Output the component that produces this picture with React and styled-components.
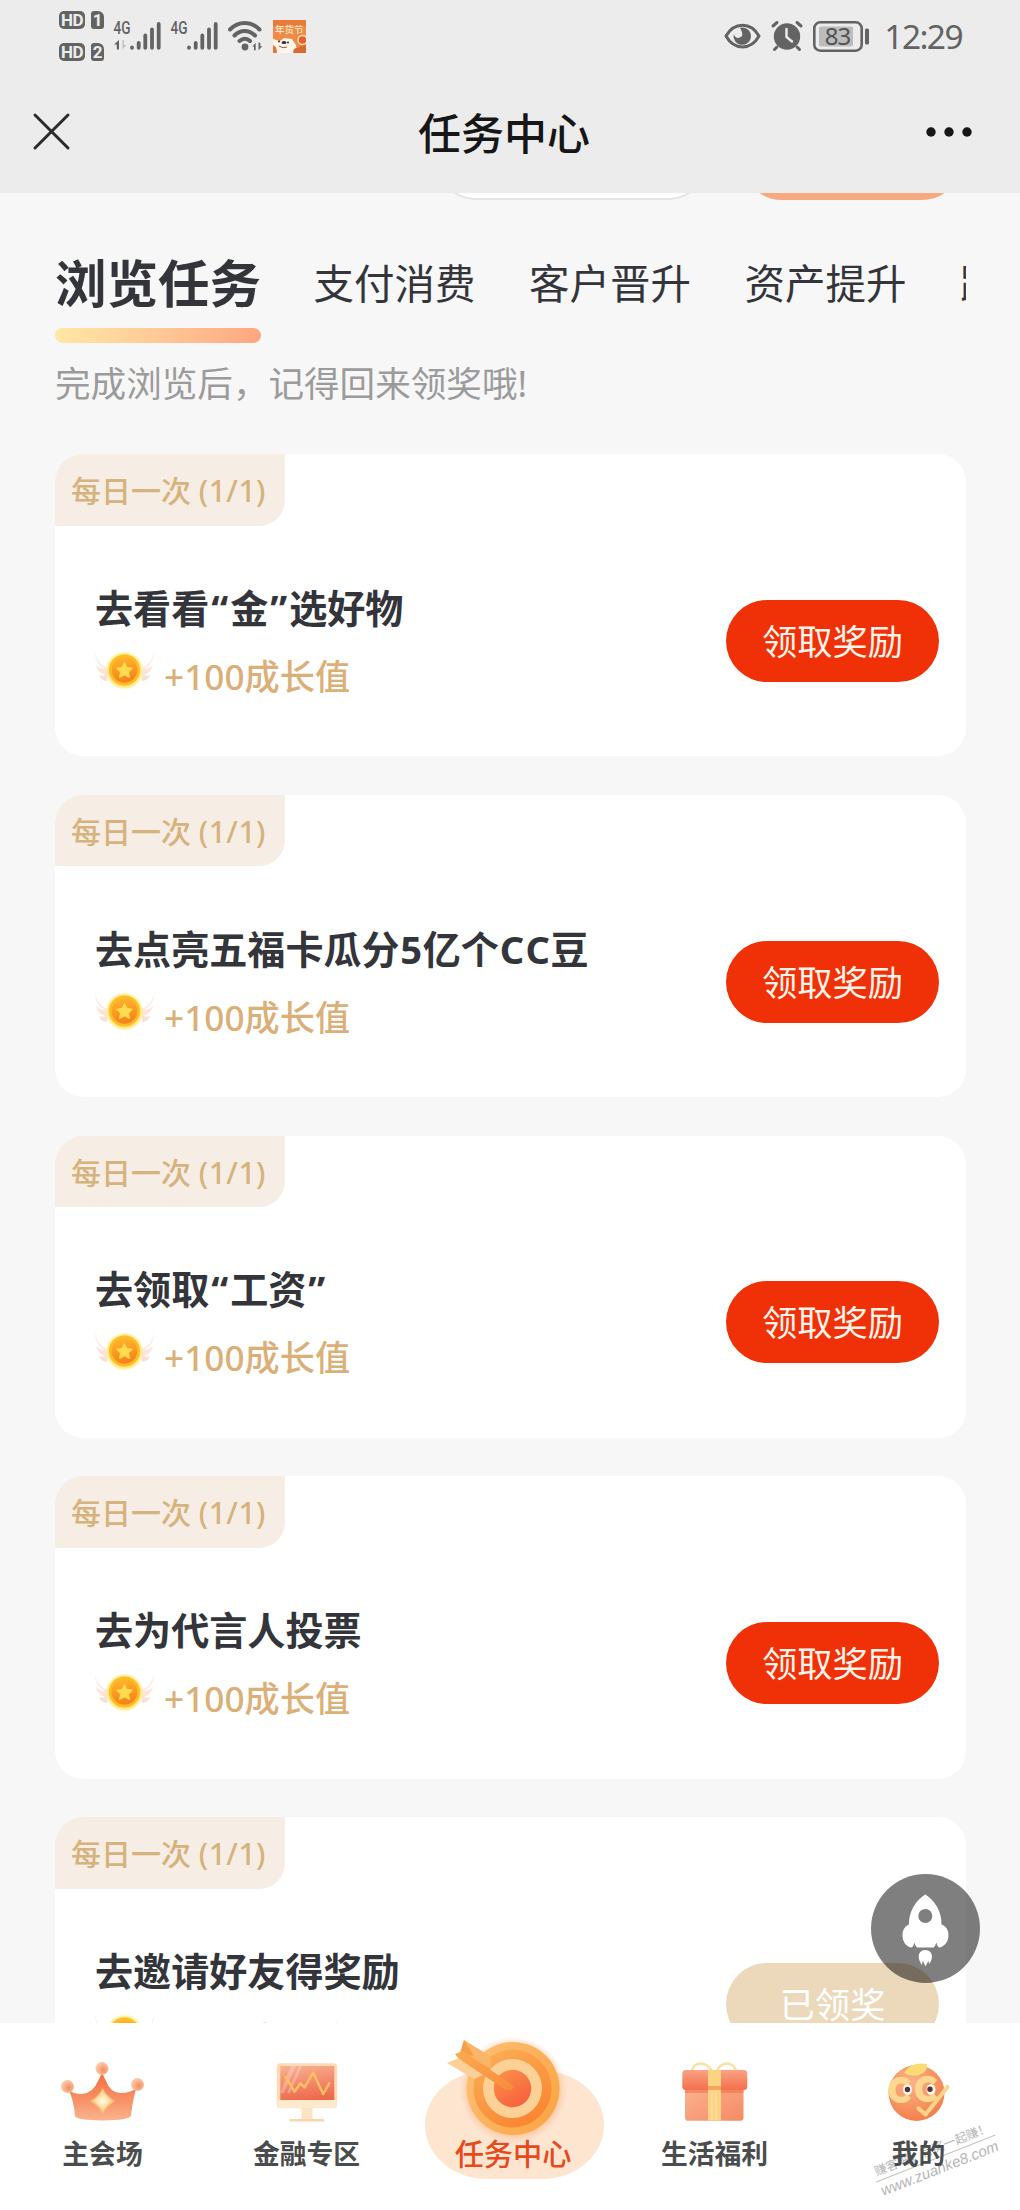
import React from 'react';
import styled, { createGlobalStyle, css } from 'styled-components';

const GlobalStyle = createGlobalStyle`
  * {
    box-sizing: border-box;
  }

  body {
    margin: 0;
    background-color: #f7f7f7;
    font-family: 'Noto Sans', 'Noto Sans CJK SC', sans-serif;
  }

  svg {
    display: block;
    flex-shrink: 0;
    overflow: visible;
  }
`;

const Page = styled.div`
  display: flex;
  flex-direction: column;
  width: 1020px;
  height: 2210px;
  overflow: hidden;
  background-color: #f7f7f7;
  color: #33353a;
`;

/* ---------- status bar + title bar ---------- */

const StatusBar = styled.div`
  display: flex;
  justify-content: space-between;
  height: 72px;
  padding: 0 58px 0 59px;
  background-color: #ececec;
`;

const StatusGroup = styled.div`
  display: flex;
  align-items: center;
  gap: 10px;
`;

const HdColumn = styled.div`
  display: flex;
  flex-direction: column;
  gap: 14px;
`;

const HdRow = styled.div`
  display: flex;
  gap: 6px;
`;

const HdTag = styled.span`
  width: ${p => p.$sim ? 13 : 26}px;
  height: 18px;
  border-radius: ${p => p.$sim ? '3px 6px 3px 3px' : '5px'};
  background-color: #636363;
  color: #ececec;
  font: 700 17px/18.5px Roboto, sans-serif;
  letter-spacing: -.5px;
  text-align: center;
`;

const Clock = styled.span`
  margin-left: 4px;
  color: #636363;
  font-size: 33.5px;
  line-height: 40px;
  letter-spacing: -1.6px;
`;

const TitleBar = styled.header`
  display: flex;
  align-items: center;
  justify-content: space-between;
  height: 121px;
  padding: 0 48px 0 33px;
  background-color: #ececec;
  color: #161616;

  svg {
    margin-bottom: 2px;
  }
`;

const PageTitle = styled.h1`
  margin: 3px 0 0 12px;
  font-size: 43px;
  font-weight: 500;
  line-height: 60px;
`;

/* ---------- scroll area ---------- */

const Content = styled.main`
  flex: 1;
  min-height: 0;
  overflow: hidden;
  padding: 0 54.5px 0 55px;
`;

// bottom edge of the buttons that are scrolled under the title bar
const PeekRow = styled.div`
  display: flex;
  justify-content: flex-end;
  align-items: flex-end;
  gap: 34px;
  height: 6.5px;
  overflow: hidden;
`;

const PeekButton = styled.div`
  flex-shrink: 0;
  width: ${p => p.$primary ? 220 : 272}px;
  height: 80px;
  margin-right: ${p => p.$primary ? 4 : 0}px;
  border: 2px solid ${p => p.$primary ? '#f8a980' : '#e4e4e4'};
  border-radius: 40px;
  background-color: ${p => p.$primary ? '#f8a980' : '#fff'};
`;

const Tabs = styled.nav`
  display: flex;
  gap: 53.5px;
  margin-top: 53.5px;
  overflow: hidden;
`;

const Tab = styled.div`
  flex-shrink: 0;
  height: 90px;
  font-size: 40.5px;
  line-height: 61px;
  white-space: nowrap;

  ${p => p.$active && css`
    font-size: 51.5px;
    font-weight: 700;
    line-height: 60px;
    margin-right: -1px;

    &::after {
      content: '';
      display: block;
      height: 15px;
      margin-top: 15px;
      border-radius: 8px;
      background: linear-gradient(100deg, #ffe8a6, #ffc996 50%, #ffa580);
    }
  `}
`;

const Hint = styled.p`
  margin: 15px 0 46px;
  color: #9b9b9b;
  font-size: 35.6px;
  line-height: 50px;
`;

const TaskList = styled.div`
  display: flex;
  flex-direction: column;
  gap: 38.5px;
`;

const Card = styled.section`
  flex-shrink: 0;
  display: flex;
  flex-direction: column;
  align-items: flex-start;
  height: 302.3px;
  overflow: hidden;
  border-radius: 28px;
  background-color: #fff;
`;

const Badge = styled.div`
  width: 230px;
  height: 71.5px;
  padding-left: 16px;
  border-radius: 0 0 26px 0;
  background-color: #f6ede4;
  color: #d6b27c;
  font-size: 30px;
  font-weight: 500;
  line-height: 73px;
  white-space: nowrap;
`;

const Count = styled.span`
  letter-spacing: .5px;
`;

const CardBody = styled.div`
  flex: 1;
  display: flex;
  align-items: center;
  justify-content: space-between;
  width: 100%;
  padding: 0 26.5px 0 39px;
`;

const TaskTitle = styled.h3`
  margin: 5px 0 0 1px;
  font-size: 38.1px;
  font-weight: 700;
  line-height: 66px;
  white-space: nowrap;
`;

const Latin = styled.span`
  padding: 0 ${p => p.$quote ? 2 : .7}px;
`;

const Reward = styled.div`
  display: flex;
  align-items: center;
  gap: 8px;
  height: 71px;
  color: #dab078;
  font-size: 35.2px;
  font-weight: 500;
  line-height: 71px;

  svg {
    margin-bottom: 13px;
  }
`;

const ClaimButton = styled.button`
  width: 213px;
  height: 82px;
  padding: 0;
  border: 0;
  border-radius: 41px;
  background-color: ${p => p.$done ? '#ecd8bb' : '#f03006'};
  color: ${p => p.$done ? '#fff' : '#fff3ea'};
  font-family: inherit;
  font-size: 35.3px;
  line-height: 82px;
`;

/* ---------- bottom bar ---------- */

const BottomBar = styled.footer`
  position: relative;
  display: flex;
  height: 187px;
  background-color: #fff;
`;

const NavItem = styled.div`
  flex: 0 0 204px;
  display: flex;
  flex-direction: column;
  align-items: center;
  padding-top: ${p => p.$active ? 48 : 39}px;
  padding-left: ${p => p.$active ? 9 : 1}px;
`;

const NavLabel = styled.span`
  position: relative;
  z-index: 1;
  margin-top: 14px;
  color: #4b4c4e;
  font-size: 26.8px;
  font-weight: 700;
  line-height: 36px;
  white-space: nowrap;
`;

const ActiveBlob = styled.div`
  display: flex;
  flex-direction: column;
  align-items: center;
  width: 179px;
  height: 108px;
  border-radius: 62px / 54px;
  background-color: #fde5d0;

  svg {
    margin: -33px 15px 0 0;
  }

  ${NavLabel} {
    margin: -2px 3px 0 0;
    color: #e6491c;
    font-size: 29.2px;
    font-weight: 500;
  }
`;

const TopButton = styled.div`
  position: absolute;
  right: 40px;
  top: -149px;
  width: 109px;
  height: 109px;
  border-radius: 50%;
  background-color: rgba(0, 0, 0, .5);
`;

const Watermark = styled.div`
  position: absolute;
  left: 872px;
  top: 117px;
  width: 128px;
  color: #b5b5b5;
  font-size: 12.3px;
  line-height: 18px;
  text-align: center;
  white-space: nowrap;
  transform: rotate(-21.5deg);
`;

const WatermarkSite = styled.div`
  border-top: 1px solid #c4c4c4;
  font: italic 15px/19px 'Liberation Sans', sans-serif;
`;

/* ---------- icons ---------- */

const Signal = ({ data }) => (
  <svg width="47" height="30" viewBox="0 0 47 30" fill="#636363">
    <text x="-.5" y="13.300" fontFamily="Roboto" fontWeight="500" fontSize="18.500" textLength="17" lengthAdjust="spacingAndGlyphs">4G</text>
    {data && <path d="M0 23.500l5-4.500v9.500H2.800v-5z" />}
    {data && <path d="M8.500 19v9.500l4-4.500H10v-5z" fill="#c2c2c2" />}
    <g stroke="#636363" strokeWidth="3.800" strokeLinecap="round">
      <path d="M18 26.500v.3M24.700 22v4.800M31.300 14.500v12.300M38 8.500v18.300M44.700 3v23.800" />
    </g>
  </svg>
);

const Wifi = () => (
  <svg width="35" height="30" viewBox="0 0 35 30" fill="none" stroke="#636363" strokeWidth="4" strokeLinecap="round">
    <path d="M2 8.500C10.500-.2 23-.2 31.500 8.500M6.500 14.500c6-6 14.500-6 20.500 0M11.500 20c3.500-3 7.500-3 10.500 0" />
    <circle cx="17" cy="26" r="3.400" fill="#636363" stroke="none" />
    <path d="M24.500 25.500l3.200-3.800v7.500H26v-3.500zM30.500 21.500v7.700l3.800-4h-2v-3.500z" fill="#636363" stroke="none" />
  </svg>
);

const AppIcon = styled.svg`
  overflow: hidden;
`;

const FestivalApp = () => (
  <AppIcon width="33" height="33" viewBox="0 0 33 33">
    <rect width="33" height="33" fill="#f08a45" />
    <rect width="33" height="6" fill="#e87a3a" />
    <text x="2" y="12.500" fontSize="9.500" fontWeight="500" fill="#fde9c8" fontFamily="Noto Sans CJK SC">年货节</text>
    <path d="M0 19l7 2 4-3 8 1 4 6 1 8H0z" fill="#fff5ea" />
    <path d="M21 29l12-5v9H20z" fill="#d96a2f" />
    <circle cx="29.500" cy="20" r="4.500" fill="#e9602d" stroke="#ffe1bd" strokeWidth="1.500" />
    <ellipse cx="11" cy="22.500" rx="2.500" ry="1.500" fill="#333" />
    <circle cx="6" cy="21.500" r="1" fill="#333" />
    <circle cx="15" cy="22.500" r="1" fill="#333" />
    <path d="M6 26q4 3 8 1" stroke="#a3583c" fill="none" />
    <path d="M0 25q4 1 4 8H0z" fill="#e5793c" />
  </AppIcon>
);

const EyeIcon = () => (
  <svg width="37" height="26" viewBox="0 0 37 26">
    <path d="M2 13C10-1.500 27-1.500 35 13 27 27.500 10 27.500 2 13z" fill="none" stroke="#636363" strokeWidth="3" strokeLinejoin="round" />
    <path d="M16 4.700A8.700 8.700 0 1 1 9.800 11q1.500 4.500 5.200 3.800 4.500-1 3-5.500-.6-2-2-4.600z" fill="#636363" />
  </svg>
);

const AlarmIcon = () => (
  <svg width="32" height="30" viewBox="0 0 32 30" fill="none" stroke="#636363" strokeLinecap="round">
    <circle cx="16" cy="15.500" r="13.200" fill="#636363" stroke="none" />
    <path d="M2 5l4-3.500M26 1.500L30 5M6 26l-2.500 2.500M26 26l2.500 2.500" strokeWidth="3" />
    <path d="M15.500 8v8l5.500 4.500" stroke="#ececec" strokeWidth="2.500" />
  </svg>
);

const Battery = () => (
  <svg width="57" height="31" viewBox="0 0 57 31">
    <rect x="1.300" y="1.300" width="47.400" height="28.400" rx="6" fill="none" stroke="#636363" strokeWidth="2.600" />
    <rect x="6" y="5.500" width="34" height="20" rx="2" fill="#bcbcbc" />
    <rect x="52" y="7.500" width="4" height="16" rx="1.500" fill="#636363" />
    <text x="24.500" y="24" textAnchor="middle" fontFamily="Noto Sans" fontSize="24" fill="#525252" letterSpacing="-1">83</text>
  </svg>
);

const CloseIcon = () => (
  <svg width="37" height="37" viewBox="0 0 37 37" stroke="#2b2b2b" strokeWidth="3" strokeLinecap="round">
    <path d="M2 2l33 33M35 2L2 35" />
  </svg>
);

const MoreIcon = () => (
  <svg width="46" height="10" viewBox="0 0 46 10" fill="#161616">
    <circle cx="5" cy="5" r="4.700" />
    <circle cx="23" cy="5" r="4.700" />
    <circle cx="41" cy="5" r="4.700" />
  </svg>
);

const Medal = () => (
  <svg width="62" height="42" viewBox="0 0 62 42">
    <defs>
      <radialGradient id="coinGlow">
        <stop offset=".65" stopColor="#ffe14d" />
        <stop offset=".85" stopColor="#ffeb85" />
        <stop offset="1" stopColor="#fff3b0" stopOpacity="0" />
      </radialGradient>
      <linearGradient id="coin" x1="0" y1="0" x2=".2" y2="1">
        <stop offset="0" stopColor="#ffb92b" />
        <stop offset="1" stopColor="#f6831c" />
      </linearGradient>
      <linearGradient id="wing" x1="0" y1="0" x2="0" y2="1">
        <stop offset="0" stopColor="#fdf4f4" />
        <stop offset="1" stopColor="#fcdccf" />
      </linearGradient>
    </defs>
    <path d="M1 2q2 14 13 17L13 32q-7-1-8-6 5 1 6 0-8-3-9-10 5 4 9 4Q0 14 1 2zM60 2q-2 14-13 17l1 13q7-1 8-6-5 1-6 0 8-3 9-10-5 4-9 4Q61 14 60 2z" fill="url(#wing)" />
    <circle cx="30.500" cy="21.500" r="19.500" fill="url(#coinGlow)" />
    <circle cx="30.500" cy="21" r="15.500" fill="#fdbb25" />
    <circle cx="30.500" cy="21" r="12.800" fill="url(#coin)" />
    <path d="M30.500 13.500l2.500 5 5.500.7-4 3.900 1 5.400-5-2.600-5 2.600 1-5.400-4-3.900 5.500-.7z" fill="#ffdb4d" stroke="#ffdb4d" strokeLinejoin="round" />
  </svg>
);

const Crown = () => (
  <svg width="84" height="60" viewBox="0 0 84 60">
    <defs>
      <linearGradient id="crownBody" x1="0" y1="0" x2="0" y2="1">
        <stop offset="0" stopColor="#f4703c" />
        <stop offset=".6" stopColor="#f7936a" />
        <stop offset="1" stopColor="#fbb48c" />
      </linearGradient>
      <radialGradient id="crownBall" cx=".6" cy=".6">
        <stop offset="0" stopColor="#f48c5c" />
        <stop offset="1" stopColor="#fbc4a4" />
      </radialGradient>
      <radialGradient id="crownGem">
        <stop offset="0" stopColor="#fffbe2" />
        <stop offset="1" stopColor="#fbcc7e" />
      </radialGradient>
    </defs>
    <path d="M7 27q4 5 14 5 11-1 16-13l4-8 4 8q4 11 14 12 12 0 17-6-4 10-6 29-2 4-28.500 4.500Q16 58 14 54.500 13 38 7 27z" fill="url(#crownBody)" />
    <circle cx="6.500" cy="24.500" r="6.500" fill="url(#crownBall)" />
    <circle cx="41" cy="6.500" r="6.500" fill="url(#crownBall)" />
    <circle cx="76.500" cy="22.500" r="6.500" fill="url(#crownBall)" />
    <path d="M41.700 27.500q4 7 11 11.500-7 4.500-11 11.500-4-7-11-11.500 7-4.500 11-11.500z" fill="url(#crownGem)" stroke="#fbc27c" strokeWidth="1.500" />
  </svg>
);

const Monitor = () => (
  <svg width="62" height="60" viewBox="0 0 62 60">
    <defs>
      <linearGradient id="screen" x1=".2" y1="0" x2=".4" y2="1">
        <stop offset="0" stopColor="#f9ae90" />
        <stop offset="1" stopColor="#ee6a4c" />
      </linearGradient>
    </defs>
    <rect x="25.500" y="45" width="11" height="13" fill="#fde3bf" />
    <rect x="13.500" y="57" width="35" height="2.500" rx="1" fill="#fbd6ac" />
    <rect x=".7" y="1.300" width="60.500" height="45" rx="4" fill="#fddcb4" />
    <rect x="1" y="38" width="60" height="8" rx="3" fill="#fdeacc" />
    <rect x="4.300" y="4" width="54" height="34" fill="url(#screen)" />
    <path d="M15 4h5L8 31H4zM23 4h3L14 31h-3z" fill="#fff" opacity=".25" />
    <path d="M9.500 14.700l9 15 6-8.400 4 4 8.700-14.600 10 21.300 6-10.700" fill="none" stroke="#fcbf62" strokeWidth="2.500" strokeLinejoin="round" strokeLinecap="round" />
  </svg>
);

const Target = () => (
  <svg width="120" height="100" viewBox="0 0 120 100">
    <defs>
      <radialGradient id="targetGlow">
        <stop offset=".8" stopColor="#ff9558" stopOpacity=".45" />
        <stop offset="1" stopColor="#ffb58a" stopOpacity="0" />
      </radialGradient>
      <linearGradient id="targetRim" x1="0" y1="0" x2="1" y2=".6">
        <stop offset="0" stopColor="#fdc277" />
        <stop offset="1" stopColor="#fba748" />
      </linearGradient>
      <linearGradient id="targetRing" x1="0" y1="0" x2=".6" y2="1">
        <stop offset="0" stopColor="#fbb15a" />
        <stop offset="1" stopColor="#fa8632" />
      </linearGradient>
      <linearGradient id="targetCore" x1="0" y1="0" x2=".6" y2="1">
        <stop offset="0" stopColor="#fa9448" />
        <stop offset="1" stopColor="#f8623f" />
      </linearGradient>
      <linearGradient id="shaft" x1="0" y1="0" x2="1" y2="1">
        <stop offset="0" stopColor="#fbab50" />
        <stop offset="1" stopColor="#f88c3c" />
      </linearGradient>
    </defs>
    <circle cx="66.500" cy="52" r="54" fill="url(#targetGlow)" />
    <circle cx="66" cy="50.500" r="46.500" fill="url(#targetRim)" />
    <circle cx="65.500" cy="50.500" r="39" fill="url(#targetRing)" />
    <circle cx="65.500" cy="50.500" r="29.500" fill="#fdd096" />
    <circle cx="65.500" cy="50.500" r="18.700" fill="url(#targetCore)" />
    <path d="M0 25l12-5 28 15-13 6z" fill="#fccf98" />
    <path d="M17 2l26 16 1 12-30-14z" fill="#fbb567" />
    <path d="M17 2l10 16-14-3z" fill="#f99d45" />
    <path d="M8 16l8-3 48 33q4 4 0 6-4 1-10-3L11 20z" fill="url(#shaft)" />
  </svg>
);

const Gift = () => (
  <svg width="66" height="60" viewBox="0 0 66 60">
    <defs>
      <linearGradient id="giftBox" x1="0" y1="0" x2="1" y2="1">
        <stop offset="0" stopColor="#fbb592" />
        <stop offset="1" stopColor="#f58a64" />
      </linearGradient>
      <linearGradient id="giftLid" x1="0" y1="0" x2="0" y2="1">
        <stop offset="0" stopColor="#faa283" />
        <stop offset="1" stopColor="#f4704c" />
      </linearGradient>
    </defs>
    <g fill="none" stroke="#fce0a0" strokeWidth="2.500">
      <path d="M30 9C24-1 12-1 10 9M35 9c4-10 17-10 19 0" />
    </g>
    <rect x="3" y="22" width="58.500" height="36.700" rx="3" fill="url(#giftBox)" />
    <rect x="3" y="27" width="58.500" height="4" fill="#f2683f" opacity=".5" />
    <rect x=".3" y="8" width="65" height="20" rx="3.500" fill="url(#giftLid)" />
    <path d="M26 8h13v50.700H26z" fill="#fcd283" />
    <path d="M26 24h13v4H26z" fill="#f6a45f" />
    <path d="M30 31v27M34 31v27" stroke="#fde3a8" />
  </svg>
);

const Mascot = () => (
  <svg width="64" height="60" viewBox="0 0 64 60">
    <defs>
      <radialGradient id="face" cx=".4" cy=".3" r=".75">
        <stop offset="0" stopColor="#fab488" />
        <stop offset="1" stopColor="#f47c48" />
      </radialGradient>
    </defs>
    <circle cx="29.500" cy="31" r="28" fill="url(#face)" />
    <path d="M17 11Q24-1 40 2q1 8-8 11-8 2-15-2z" fill="#fadb76" />
    <ellipse cx="20.500" cy="27.500" rx="4.500" ry="5.500" fill="#fff6ea" />
    <ellipse cx="44" cy="27.500" rx="4.500" ry="5.500" fill="#fff6ea" />
    <g fontFamily="Lato" fontWeight="900" fontSize="32" fill="#fdd68f" stroke="#fdd68f" strokeWidth="2.200" strokeLinejoin="round">
      <text x="1.500" y="39.500">C</text>
      <text x="28" y="38.500">C</text>
    </g>
    <circle cx="20.500" cy="27.500" r="2.700" fill="#51343a" />
    <circle cx="43" cy="27.300" r="2.700" fill="#51343a" />
    <path d="M31.500 46.500l7 6L60.500 25" fill="none" stroke="#fdd58a" strokeWidth="4.200" strokeLinecap="round" strokeLinejoin="round" />
  </svg>
);

const Rocket = () => (
  <svg width="109" height="109" viewBox="0 0 109 109" fill="#fff">
    <path fillRule="evenodd" d="M54.300 20.500C63 26 71 37 70.500 50.500c5 2 7 6 7 10.500 0 6-3 10.500-8.500 12.500-2 0-3-2-3.500-5-1 2-1.500 4-3 5H46.200c-1.500-1-2-3-3-5-.5 3-1.500 5-3.500 5C34 71.500 31.500 67 31.500 61c0-4.500 2-8.500 6.500-10.500C37.500 37 45.500 26 54.300 20.500zM54.300 35a7 7 0 1 0 0 14 7 7 0 0 0 0-14z" />
    <path d="M54.300 76c4.500 0 6.700 3 6.700 6.500 0 3-1.500 5.500-3 7.500l-.5-3.500-3 6-2.700-6-.8 4.500c-2-2.500-3.300-5.500-3.300-8.500 0-3.500 2.300-6.500 6.600-6.500z" />
  </svg>
);

const tabs = ['浏览任务', '支付消费', '客户晋升', '资产提升', '跨境金融'];

const tasks = [
  { title: '去看看“金”选好物' },
  { title: '去点亮五福卡瓜分5亿个CC豆' },
  { title: '去领取“工资”' },
  { title: '去为代言人投票' },
  { title: '去邀请好友得奖励', done: true },
];

const navItems = [
  { label: '主会场', Icon: Crown },
  { label: '金融专区', Icon: Monitor },
  { label: '任务中心', Icon: Target, active: true },
  { label: '生活福利', Icon: Gift },
  { label: '我的', Icon: Mascot },
];

// quotes and latin characters need a bit of air between the hanzi
const renderTitle = title => title.split(/([“”5C])/).map((part, i) => (
  i % 2 ? <Latin key={i} $quote={/[“”]/.test(part)}>{part}</Latin> : part
));

const Task = ({ title, done }) => (
  <Card>
    <Badge>每日一次 <Count>(1/1)</Count></Badge>
    <CardBody>
      <div>
        <TaskTitle>{renderTitle(title)}</TaskTitle>
        <Reward><Medal />+100成长值</Reward>
      </div>
      <ClaimButton $done={done}>{done ? '已领奖' : '领取奖励'}</ClaimButton>
    </CardBody>
  </Card>
);

function App() {
  const renderNav = ({ label, Icon, active }) => (
    <NavItem key={label} $active={active}>
      {active
        ? <ActiveBlob><Icon /><NavLabel>{label}</NavLabel></ActiveBlob>
        : <><Icon /><NavLabel>{label}</NavLabel></>}
    </NavItem>
  );

  return (
    <Page>
      <GlobalStyle />
      <StatusBar>
        <StatusGroup>
          <HdColumn>
            {[1, 2].map(n => (
              <HdRow key={n}><HdTag>HD</HdTag><HdTag $sim>{n}</HdTag></HdRow>
            ))}
          </HdColumn>
          <Signal data />
          <Signal />
          <Wifi />
          <FestivalApp />
        </StatusGroup>
        <StatusGroup>
          <EyeIcon />
          <AlarmIcon />
          <Battery />
          <Clock>12:29</Clock>
        </StatusGroup>
      </StatusBar>

      <TitleBar>
        <CloseIcon />
        <PageTitle>任务中心</PageTitle>
        <MoreIcon />
      </TitleBar>

      <Content>
        <PeekRow>
          <PeekButton />
          <PeekButton $primary />
        </PeekRow>
        <Tabs>
          {tabs.map((t, i) => <Tab key={t} $active={i === 0}>{t}</Tab>)}
        </Tabs>
        <Hint>完成浏览后，记得回来领奖哦!</Hint>
        <TaskList>
          {tasks.map(t => <Task key={t.title} {...t} />)}
        </TaskList>
      </Content>

      <BottomBar>
        <Watermark>
          赚客吧，有奖一起赚！
          <WatermarkSite>www.zuanke8.com</WatermarkSite>
        </Watermark>
        {navItems.map(renderNav)}
        <TopButton><Rocket /></TopButton>
      </BottomBar>
    </Page>
  );
}

export default App;
